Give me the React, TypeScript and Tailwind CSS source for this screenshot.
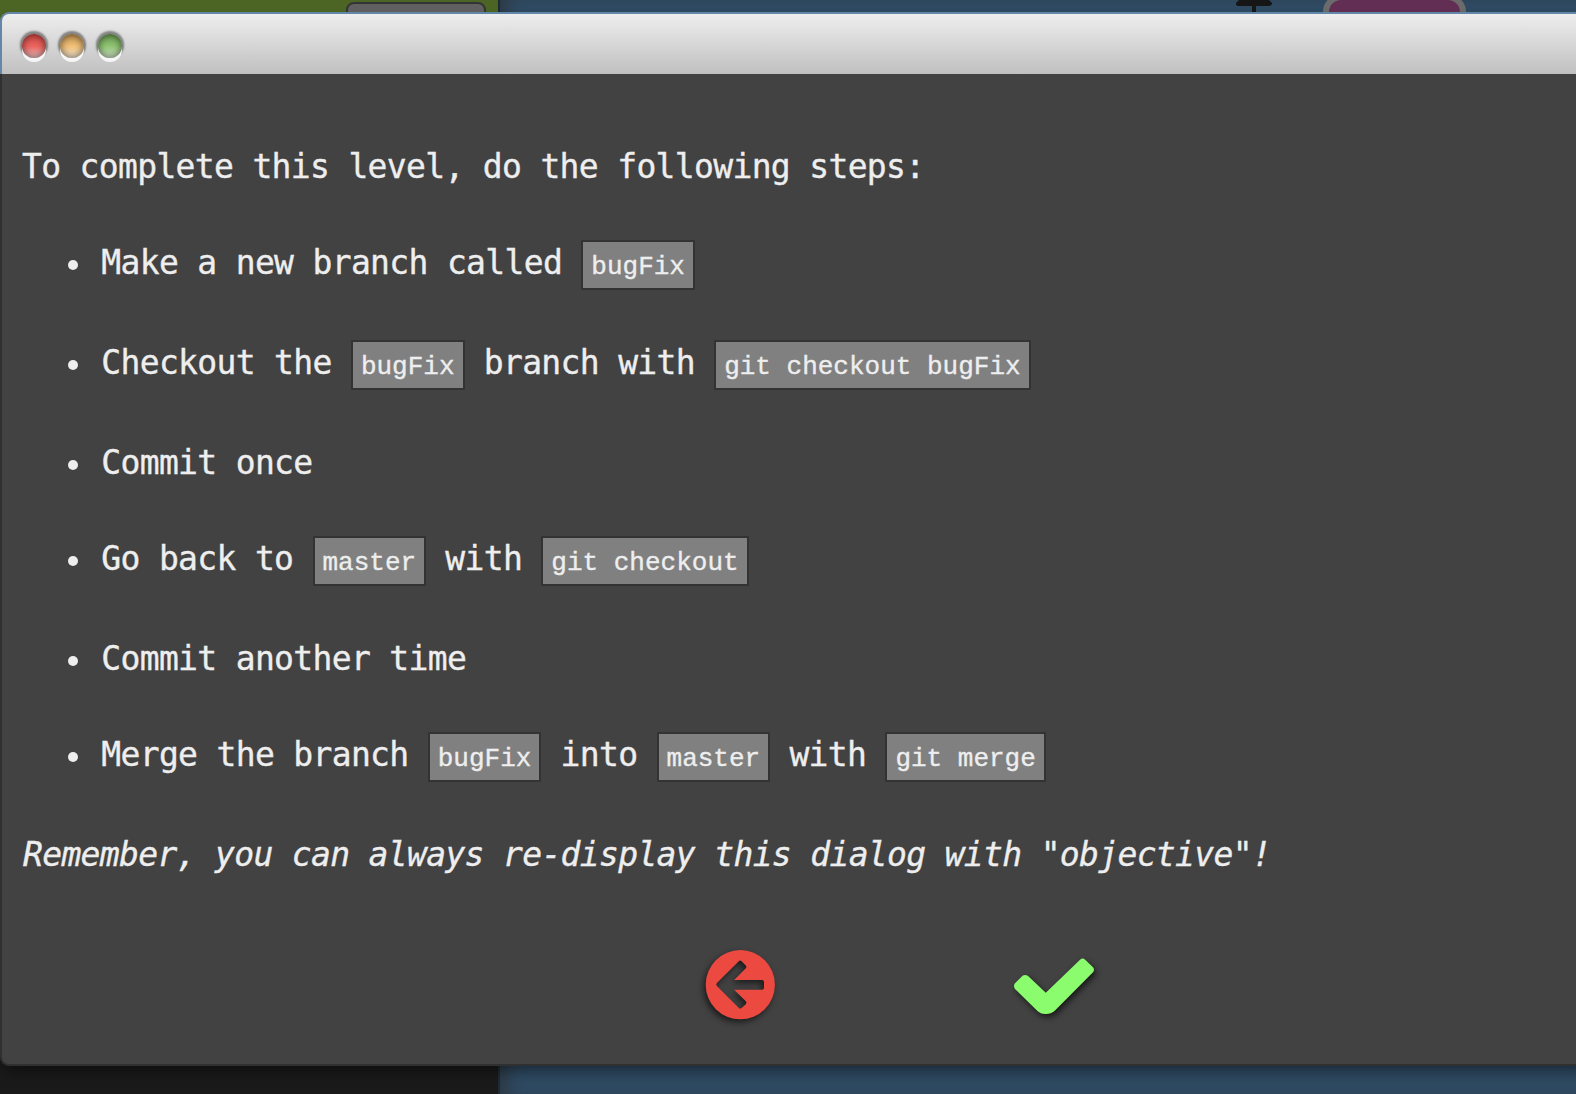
import type { ReactNode } from "react";

const mono = 'font-["DejaVu_Sans_Mono","Liberation_Mono",monospace]';

function Code({ children }: { children: ReactNode }) {
  return (
    <code className='inline-block h-[50px] border-2 border-[#333333] bg-[#808080] px-2 pt-1 font-["Liberation_Mono",monospace] text-[26px] leading-[42px] tracking-normal'>
      {children}
    </code>
  );
}

function Step({ height, children }: { height: string; children: ReactNode }) {
  return (
    <li className={`flex ${height}`}>
      <span className="mt-[22px] mr-[23.3px] ml-[46px] size-2.5 shrink-0 rounded-full bg-[#eeeeee]" />
      <div className="whitespace-pre">{children}</div>
    </li>
  );
}

function Light({ color }: { color: string }) {
  return (
    <span
      className={`size-6 rounded-full shadow-[0_4px_0_0_#f6f6f6,0_-1px_2px_2px_rgba(0,0,0,0.42),inset_0_0_7px_1px_rgba(0,0,0,0.5)] ${color}`}
    />
  );
}

function BackIcon() {
  return (
    <svg width="120" height="110" viewBox="0 0 120 110" className="overflow-visible drop-shadow-[-2px_3px_3px_rgba(0,0,0,0.6)]">
      <mask id="arrow">
        <rect width="120" height="110" fill="white" />
        <path
          d="M38.3 54.5 60.2 32.6 64.4 36.8 49.2 52H82V57.7H49.2L64.4 72.7 60.3 76.5Z"
          fill="black"
          stroke="black"
          strokeWidth="4"
          strokeLinejoin="round"
        />
      </mask>
      <circle cx="60.3" cy="54.7" r="34.6" fill="#ec4a41" mask="url(#arrow)" />
    </svg>
  );
}

function CheckIcon() {
  return (
    <svg width="120" height="110" viewBox="0 0 120 110" className="overflow-visible drop-shadow-[2px_3px_3px_rgba(0,0,0,0.65)]">
      <path
        d="M32.5 45.8Q35 44 37.8 45.8L55.8 62.8 90.3 29.5Q92.7 27.5 95.2 29.7L103 37.3Q105 39.8 103 42.2L64.5 81Q61 84 56 84Q51.5 84.3 48 81.5L25 59Q23 56 25 53.3Z"
        fill="#8afc6e"
      />
    </svg>
  );
}

export default function App() {
  return (
    <div className={`relative h-[1094px] w-[1576px] overflow-hidden ${mono}`}>
      {/* Page behind the dialog */}
      <div className="absolute inset-0 flex">
        <div className="flex w-[498px] flex-col bg-[#1a1a1a]">
          <div className="h-12 bg-[#4c6424]">
            <div className="mt-0.5 ml-[346px] h-10 w-[140px] rounded-lg border-2 border-[#343434] bg-[#606060]" />
          </div>
        </div>
        <div className="relative flex-1 bg-[#2f4b63] shadow-[inset_2px_0_0_0_#1e2a35,inset_16px_0_18px_-8px_rgba(45,50,55,0.8)]">
          <svg width="40" height="14" className="absolute top-0 left-[738px]">
            <path d="M3 0H33L36 3V4Q35 6 33 6H3Q0 6 0 4V3Z" fill="#161616" />
            <path d="M16 5h4v9h-4z" fill="#161616" />
          </svg>
          <div className="absolute -top-1.5 left-[825px] h-12 w-[143px] rounded-[18px] border-[6px] border-[#6b6b6b] bg-[#632e53]" />
        </div>
      </div>

      {/* Dialog window */}
      <div className="absolute top-3 left-0 flex h-[1054px] w-[1600px] flex-col rounded-[9px] shadow-[0_10px_16px_-6px_rgba(0,0,0,0.5)]">
        <header className="flex h-[62px] shrink-0 items-start gap-3.5 rounded-t-[9px] border-t-2 border-l-2 border-[#6486a8] bg-linear-to-b from-[#eeeeee] to-[#c0c0c0] pt-5 pl-5">
          <Light color="bg-[linear-gradient(#d04844_0%,#ee6560_52%,#efc4c4_100%)]" />
          <Light color="bg-[linear-gradient(#c49450_0%,#f3c27a_52%,#f5e6d2_100%)]" />
          <Light color="bg-[linear-gradient(#6c9e50_0%,#92c676_52%,#d3e4ca_100%)]" />
        </header>
        <main className="flex-1 rounded-bl-[9px] border-b-2 border-l-2 border-[#303030] bg-[#424242] pt-[68px] pl-5 text-[33px] leading-[50px] tracking-[-0.667px] text-[#eeeeee] [-webkit-text-stroke:0.35px_#eeeeee]">
          <p className="h-24">To complete this level, do the following steps:</p>
          <ul>
            <Step height="h-[100px]">
              Make a new branch called <Code>bugFix</Code>
            </Step>
            <Step height="h-[100px]">
              Checkout the <Code>bugFix</Code> branch with <Code>git checkout bugFix</Code>
            </Step>
            <Step height="h-24">Commit once</Step>
            <Step height="h-[100px]">
              Go back to <Code>master</Code> with <Code>git checkout</Code>
            </Step>
            <Step height="h-24">Commit another time</Step>
            <Step height="h-[100px]">
              Merge the branch <Code>bugFix</Code> into <Code>master</Code> with <Code>git merge</Code>
            </Step>
          </ul>
          <p className="h-[100px] pl-px italic">Remember, you can always re-display this dialog with "objective"!</p>
          <div className="ml-[658px] flex gap-[190px]">
            <button aria-label="Back">
              <BackIcon />
            </button>
            <button aria-label="Confirm">
              <CheckIcon />
            </button>
          </div>
        </main>
      </div>
    </div>
  );
}
